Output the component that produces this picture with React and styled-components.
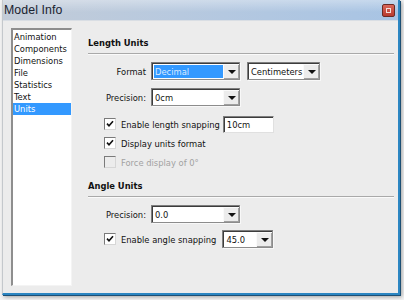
import React from "react";
import styled, { createGlobalStyle } from "styled-components";

const Global = createGlobalStyle`
  html, body { margin: 0; padding: 0; background: #f4f4f4; }
  body { width: 404px; height: 300px; overflow: hidden; }
`;

const UI_FONT = `"DejaVu Sans Condensed", "Liberation Sans", sans-serif`;

const Window = styled.div`
  margin-left: 2px;
  width: 398px;
  height: 295px;
  box-sizing: border-box;
  display: flex;
  flex-direction: column;
  background: #ececec;
  border-left: 1px solid #c4c8cc;
  border-right: 2px solid #2c86c2;
  border-bottom: 2px solid #2c86c2;
  box-shadow: 1px 1px 0 #1d4f74, 2px 2px 4px rgba(0, 0, 0, 0.35);
  font-family: ${UI_FONT};
  font-size: 9.3px;
  color: #111;
`;

const TitleBar = styled.div`
  height: 20px;
  flex: none;
  display: flex;
  align-items: center;
  justify-content: space-between;
  padding: 0 2px 0 1px;
  background: linear-gradient(to bottom, rgba(255,255,255,0.35), rgba(255,255,255,0) 60%),
    linear-gradient(to right, #c3ccd8 0%, #b7c9df 45%, #a8c4e4 100%);
  border-bottom: 1px solid #d9dee4;
`;

const Title = styled.span`
  font-family: "Liberation Sans", Arial, sans-serif;
  font-size: 12.3px;
  color: #1a2330;
  letter-spacing: 0.1px;
`;

const CloseButton = styled.div`
  width: 11px;
  height: 11px;
  margin-right: 1px;
  border: 1px solid #6b2a24;
  border-radius: 2px;
  background: linear-gradient(#d9675b, #b83a2e);
  display: flex;
  align-items: center;
  justify-content: center;
  &::after {
    content: "";
    width: 3px;
    height: 3px;
    border: 1px solid #f4e0dc;
  }
`;

const Body = styled.div`
  flex: 1;
  display: flex;
  padding: 7px 4px 7px 8px;
  min-height: 0;
`;

const ListBox = styled.div`
  width: 61px;
  box-sizing: border-box;
  background: #fff;
  border-top: 2px solid #8e8e8e;
  border-left: 2px solid #8e8e8e;
  border-right: 1px solid #f4f4f4;
  border-bottom: 1px solid #f4f4f4;
  padding-top: 1px;
  display: flex;
  flex-direction: column;
`;

const ListItem = styled.div`
  height: 12px;
  line-height: 12px;
  padding-left: 1px;
  white-space: nowrap;
  background: ${(p) => (p.$selected ? "#3399ff" : "transparent")};
  color: ${(p) => (p.$selected ? "#fff" : "#111")};
`;

const Panel = styled.div`
  flex: 1;
  margin-left: 16px;
  padding-top: 9px;
  display: flex;
  flex-direction: column;
`;

const SectionTitle = styled.div`
  height: 12px;
  line-height: 12px;
  font-weight: bold;
  margin-top: ${(p) => p.$mt || 0}px;
`;

const Separator = styled.div`
  height: 1px;
  margin-top: 4px;
  background: #a9a9a9;
  border-bottom: 1px solid #fafafa;
`;

const FieldRow = styled.div`
  display: grid;
  grid-template-columns: 58px auto auto;
  justify-content: start;
  align-items: center;
  column-gap: 5px;
  margin-top: ${(p) => p.$mt || 0}px;
`;

const FieldLabel = styled.span`
  text-align: right;
  white-space: nowrap;
`;

const CheckRow = styled.div`
  display: flex;
  align-items: center;
  padding-left: 16px;
  height: ${(p) => p.$h || 14}px;
  margin-top: ${(p) => p.$mt || 0}px;
  color: ${(p) => (p.$disabled ? "#a2a2a2" : "#111")};
`;

const Box = styled.span`
  width: 10px;
  height: 10px;
  flex: none;
  margin-right: 5px;
  border-top: 1px solid #7a7a7a;
  border-left: 1px solid #7a7a7a;
  border-right: 1px solid #d6d6d6;
  border-bottom: 1px solid #d6d6d6;
  background: ${(p) => (p.$disabled ? "#ececec" : "#fff")};
  display: flex;
  align-items: center;
  justify-content: center;
`;

const CheckLabel = styled.span`
  white-space: nowrap;
`;

const Select = styled.div`
  display: flex;
  align-items: stretch;
  width: ${(p) => p.$w}px;
  height: ${(p) => p.$h || 18}px;
  box-sizing: border-box;
  margin-left: ${(p) => p.$ml || 0}px;
  border-top: 1px solid #7e7e7e;
  border-left: 1px solid #7e7e7e;
  border-right: 1px solid #8c8c8c;
  border-bottom: 1px solid #8c8c8c;
  box-shadow: inset 1px 1px 0 #3c3c3c, 1px 1px 0 #f8f8f8;
  background: #fff;
`;

const SelectValue = styled.div`
  flex: 1;
  margin: 2px 0 1px 2px;
  padding-left: 1px;
  display: flex;
  align-items: center;
  white-space: nowrap;
  overflow: hidden;
  background: ${(p) => (p.$highlight ? "#3399ff" : "transparent")};
  color: ${(p) => (p.$highlight ? "#dceaff" : "#111")};
`;

const DropButton = styled.div`
  width: 15px;
  flex: none;
  margin: 1px 0 0 0;
  background: #ececec;
  border-left: 1px solid #fafafa;
  border-top: 1px solid #fafafa;
  box-shadow: inset -1px -1px 0 #a0a0a0;
  display: flex;
  align-items: center;
  justify-content: center;
  &::after {
    content: "";
    width: 0;
    height: 0;
    border-left: 4px solid transparent;
    border-right: 4px solid transparent;
    border-top: 4px solid #111;
  }
`;

const TextInput = styled.div`
  width: ${(p) => p.$w}px;
  height: 17px;
  box-sizing: border-box;
  margin-left: ${(p) => p.$ml || 0}px;
  border-top: 1px solid #7e7e7e;
  border-left: 1px solid #7e7e7e;
  border-right: 1px solid #e0e0e0;
  border-bottom: 1px solid #e0e0e0;
  box-shadow: inset 1px 1px 0 #3c3c3c;
  background: #fff;
  padding-left: 3px;
  display: flex;
  align-items: center;
`;

function Check({ checked, disabled }) {
  return (
    <Box $disabled={disabled}>
      {checked && (
        <svg width="8" height="8" viewBox="0 0 8 8">
          <path d="M1 3.6 L3 5.8 L7 1.2" fill="none" stroke="#111" strokeWidth="1.6" />
        </svg>
      )}
    </Box>
  );
}

function Dropdown({ value, w, highlight, ml }) {
  return (
    <Select $w={w} $ml={ml}>
      <SelectValue $highlight={highlight}>{value}</SelectValue>
      <DropButton />
    </Select>
  );
}

const items = ["Animation", "Components", "Dimensions", "File", "Statistics", "Text", "Units"];

export default function App() {
  return (
    <>
      <Global />
      <Window>
        <TitleBar>
          <Title>Model Info</Title>
          <CloseButton />
        </TitleBar>
        <Body>
          <ListBox>
            {items.map((it) => (
              <ListItem key={it} $selected={it === "Units"}>
                {it}
              </ListItem>
            ))}
          </ListBox>
          <Panel>
            <SectionTitle>Length Units</SectionTitle>
            <Separator />
            <FieldRow $mt={7}>
              <FieldLabel>Format</FieldLabel>
              <Dropdown value="Decimal" w={89} highlight />
              <Dropdown value="Centimeters" w={73} ml={2} />
            </FieldRow>
            <FieldRow $mt={8}>
              <FieldLabel>Precision:</FieldLabel>
              <Dropdown value="0cm" w={89} />
            </FieldRow>
            <CheckRow $h={18} $mt={9}>
              <Check checked />
              <CheckLabel>Enable length snapping</CheckLabel>
              <TextInput $w={51} $ml={3}>10cm</TextInput>
            </CheckRow>
            <CheckRow $mt={3}>
              <Check checked />
              <CheckLabel>Display units format</CheckLabel>
            </CheckRow>
            <CheckRow $mt={5} $disabled>
              <Check disabled />
              <CheckLabel>Force display of 0°</CheckLabel>
            </CheckRow>
            <SectionTitle $mt={11}>Angle Units</SectionTitle>
            <Separator />
            <FieldRow $mt={7}>
              <FieldLabel>Precision:</FieldLabel>
              <Dropdown value="0.0" w={89} />
            </FieldRow>
            <CheckRow $h={18} $mt={7}>
              <Check checked />
              <CheckLabel>Enable angle snapping</CheckLabel>
              <Dropdown value="45.0" w={51} ml={6} />
            </CheckRow>
          </Panel>
        </Body>
      </Window>
    </>
  );
}
